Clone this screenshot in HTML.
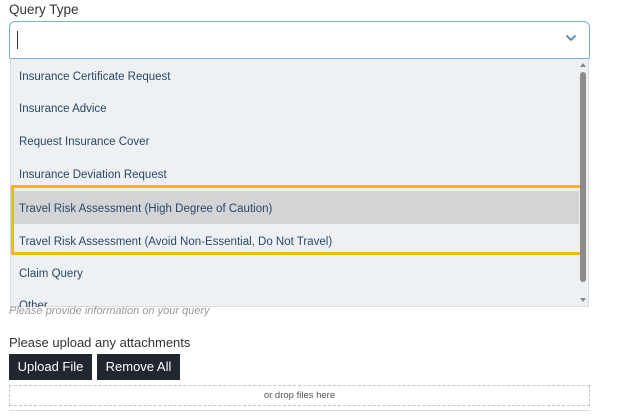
<!DOCTYPE html>
<html><head><style>
*{margin:0;padding:0;box-sizing:border-box}
body{width:624px;height:418px;background:#fff;font-family:"Liberation Sans",sans-serif;position:relative;overflow:hidden}
.a{position:absolute}
.item{position:absolute;left:19px;font-size:11.5px;color:#2b4764;line-height:14px}
</style></head><body>
<div class="a" style="left:9px;top:2px;font-size:13.5px;color:#333">Query Type</div>
<div class="a" style="left:9px;top:21px;width:581px;height:38px;border:1px solid #7aaecb;border-radius:6px;border-bottom-left-radius:2px;border-bottom-right-radius:2px;background:#fff"></div>
<div class="a" style="left:17px;top:31px;width:1px;height:18px;background:#333"></div>
<svg class="a" style="left:565px;top:34px" width="12" height="8"><path d="M1.5 1.5 L6 6 L10.5 1.5" fill="none" stroke="#3a7fb5" stroke-width="1.6"/></svg>
<div class="a" style="left:10px;top:59px;width:579px;height:248px;background:#edf1f4;border:1px solid #d8dde2;border-top:none"></div>
<div class="a" style="left:12px;top:191px;width:567px;height:33px;background:#d3d4d6"></div>
<div class="item" style="top:70px">Insurance Certificate Request</div>
<div class="item" style="top:102px">Insurance Advice</div>
<div class="item" style="top:135px">Request Insurance Cover</div>
<div class="item" style="top:168px">Insurance Deviation Request</div>
<div class="item" style="top:202px">Travel Risk Assessment (High Degree of Caution)</div>
<div class="item" style="top:235px">Travel Risk Assessment (Avoid Non-Essential, Do Not Travel)</div>
<div class="item" style="top:267px">Claim Query</div>
<div class="a" style="left:10px;top:298px;width:579px;height:9px;overflow:hidden"><div style="position:absolute;left:9px;top:2px;font-size:11.5px;color:#2b4764">Other</div></div>
<div class="a" style="left:11px;top:185px;width:572px;height:70px;border:3px solid #f7b900"></div>
<div class="a" style="left:580px;top:72px;width:6px;height:210px;background:#8c8c8c;border-radius:3px"></div>
<div class="a" style="left:580px;top:63px;width:0;height:0;border-left:3px solid transparent;border-right:3px solid transparent;border-bottom:4px solid #888"></div>
<div class="a" style="left:580px;top:298px;width:0;height:0;border-left:3px solid transparent;border-right:3px solid transparent;border-top:4px solid #888"></div>
<div class="a" style="left:9px;top:305px;font-size:11px;color:#999;font-style:italic">Please provide information on your query</div>
<div class="a" style="left:9px;top:335px;font-size:13px;color:#333">Please upload any attachments</div>
<div class="a" style="left:9px;top:354px;width:83px;height:26px;background:#22262f;color:#fff;font-size:13px;line-height:26px;text-align:center">Upload File</div>
<div class="a" style="left:97px;top:354px;width:83px;height:26px;background:#22262f;color:#fff;font-size:13px;line-height:26px;text-align:center">Remove All</div>
<div class="a" style="left:9px;top:385px;width:581px;height:21px;border:1px dashed #c6c6c6;font-size:9.5px;color:#555;text-align:center;line-height:19px">or drop files here</div>
<div class="a" style="left:9px;top:410px;width:581px;height:1px;background:#ddd"></div>
</body></html>
